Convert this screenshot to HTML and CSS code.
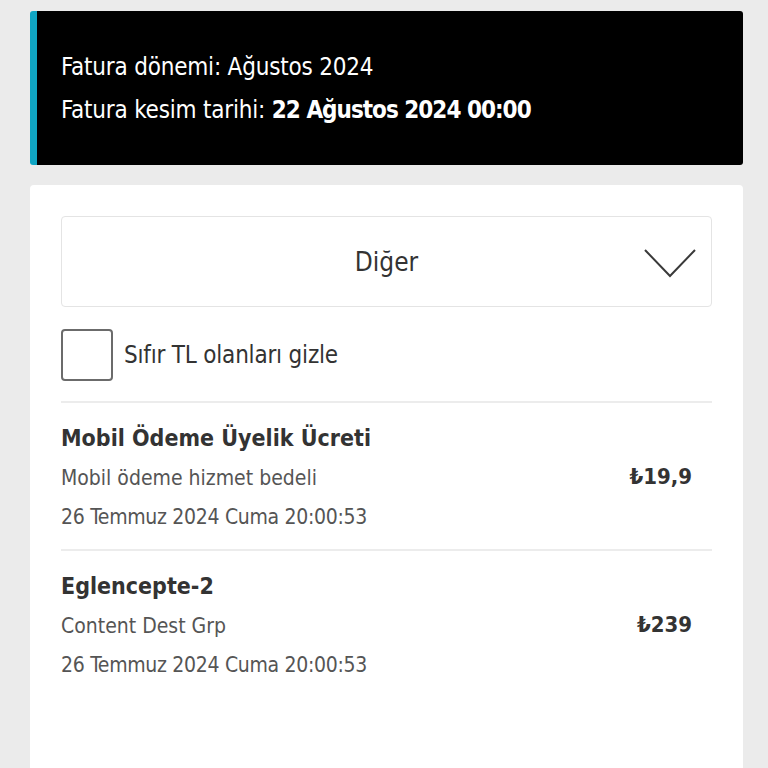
FILE: index.html
```html
<!DOCTYPE html>
<html lang="tr">
<head>
    <meta charset="UTF-8">
    <title>Fatura</title>
    <link rel="stylesheet" href="styles.css">
</head>
<body>
    <div class="page">
        <div class="bill-head">
            <p>Fatura dönemi: Ağustos 2024</p>
            <p>Fatura kesim tarihi: <b>22 Ağustos 2024 00:00</b></p>
        </div>

        <div class="bill-card">
            <div class="select-box">
                <span>Diğer</span>
                <svg class="chevron" width="54" height="30" viewBox="0 0 54 30">
                    <path d="M2 2 L27 28 L52 2" fill="none" stroke="#3a3a3a" stroke-width="2"/>
                </svg>
            </div>

            <label class="check-row">
                <span class="check-box"></span>
                <span>Sıfır TL olanları gizle</span>
            </label>

            <ul class="item-list">
                <li>
                    <div class="item-info">
                        <h3>Mobil Ödeme Üyelik Ücreti</h3>
                        <p>Mobil ödeme hizmet bedeli</p>
                        <p class="date">26 Temmuz 2024 Cuma 20:00:53</p>
                    </div>
                    <div class="item-price">₺19,9</div>
                </li>
                <li>
                    <div class="item-info">
                        <h3>Eglencepte-2</h3>
                        <p>Content Dest Grp</p>
                        <p class="date">26 Temmuz 2024 Cuma 20:00:53</p>
                    </div>
                    <div class="item-price">₺239</div>
                </li>
            </ul>
        </div>
    </div>
</body>
</html>
```

FILE: styles.css
```css
* {
    margin: 0;
    padding: 0;
    box-sizing: border-box;
}
ul {
    list-style: none;
}
body {
    background-color: #ebebeb;
    font-family: "DejaVu Sans Condensed", "DejaVu Sans", sans-serif;
    color: #333;
}
.page {
    padding: 11px 25px 0 30px;
}
.bill-head {
    height: 154px;
    padding: 35px 0 0 24px;
    color: #fff;
    background-color: #000;
    border-left: 7px solid #10a5c3;
    border-radius: 3px;
}
.bill-head p {
    font-size: 24px;
    line-height: 43px;
    letter-spacing: -0.2px;
}
.bill-head b {
    font-weight: bold;
    letter-spacing: -1px;
}
.bill-card {
    margin-top: 20px;
    min-height: 600px;
    padding: 31px 31px 0 31px;
    background-color: #fff;
    border-radius: 4px;
}
.select-box {
    position: relative;
    display: flex;
    align-items: center;
    justify-content: center;
    height: 91px;
    border: 1px solid #e4e4e4;
    border-radius: 4px;
    font-size: 26px;
}
.chevron {
    position: absolute;
    right: 14px;
    top: 31px;
}
.check-row {
    display: flex;
    align-items: center;
    gap: 11px;
    margin-top: 22px;
    font-size: 24px;
    letter-spacing: -0.2px;
}
.check-box {
    width: 52px;
    height: 52px;
    border: 2px solid #6b6b6b;
    border-radius: 4px;
}
.item-list {
    margin-top: 20px;
}
.item-list li {
    display: flex;
    align-items: center;
    justify-content: space-between;
    padding: 16px 20px 13px 0;
    border-top: 2px solid #ececec;
}
.item-list h3 {
    font-size: 23px;
    line-height: 39px;
    font-weight: bold;
}
.item-list p {
    font-size: 21px;
    line-height: 40px;
    color: #555;
}
.item-list p.date {
    line-height: 38px;
    letter-spacing: -0.3px;
}
.item-price {
    font-size: 22px;
    font-weight: bold;
    padding-bottom: 2px;
}
```
